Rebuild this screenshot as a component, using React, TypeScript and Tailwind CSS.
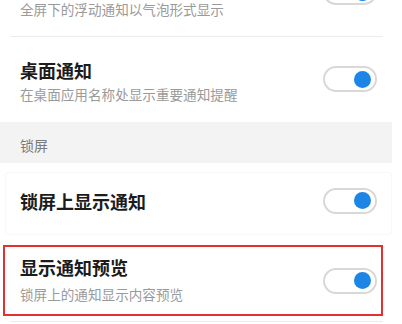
import React from 'react';

const Toggle = ({ className = '' }: { className?: string }) => (
  <div
    className={`w-[54px] h-[26px] shrink-0 rounded-full border-2 border-[#d8d8d8] bg-white flex items-center justify-end pr-[4px] ${className}`}
  >
    <div className="w-[17px] h-[17px] rounded-full bg-[#1b86e6]" />
  </div>
);

const Title = ({ children }: { children: React.ReactNode }) => (
  <div className="text-[18px] leading-[24px] font-semibold text-[#1c1c1c]">{children}</div>
);

const Sub = ({ children, className = '' }: { children: React.ReactNode; className?: string }) => (
  <div className={`text-[13.6px] leading-[24px] text-[#9a9a9a] ${className}`}>{children}</div>
);

export default function App() {
  return (
    <div
      className="w-[402px] h-[324px] overflow-hidden bg-white"
      style={{ fontFamily: '"Noto Sans CJK SC", "Noto Sans", sans-serif' }}
    >
      <div className="w-[392px]">
        {/* row scrolled mostly out of view: only its subtitle and toggle edge show */}
        <div className="mt-[-47px] flex items-center justify-between pl-5 pr-[15px] pt-[44px] pb-[15px]">
          <Sub>全屏下的浮动通知以气泡形式显示</Sub>
          <Toggle className="-mt-[34px]" />
        </div>
        <div className="h-px bg-[#ececec] ml-[10px] mr-[9px]" />

        <div className="flex items-center justify-between pl-5 pr-[15px] pt-[21px] pb-[16px]">
          <div>
            <Title>桌面通知</Title>
            <Sub>在桌面应用名称处显示重要通知提醒</Sub>
          </div>
          <Toggle className="-mt-[6px]" />
        </div>

        <div className="h-[41px] bg-[#f3f3f3] pl-5 pt-[13px] text-[14px] leading-[20px] text-[#7a7a7a]">
          锁屏
        </div>

        <div className="mt-[9px] ml-[5px] h-[63px] flex items-center justify-between border border-[#f8f8f8] rounded-[3px] pl-[14px] pr-[14px] pb-[6px]">
          <Title>锁屏上显示通知</Title>
          <Toggle />
        </div>

        <div className="mt-[10px] ml-[3px] w-[380px] flex items-center justify-between border-2 border-[#e2312f] pl-[15px] pr-[4px] pt-[8px] pb-[8px]">
          <div>
            <Title>显示通知预览</Title>
            <Sub className="mt-[3px]">锁屏上的通知显示内容预览</Sub>
          </div>
          <Toggle />
        </div>

        <div className="mt-[5px] h-px bg-[#ececec] ml-[10px] mr-[9px]" />
      </div>
    </div>
  );
}
